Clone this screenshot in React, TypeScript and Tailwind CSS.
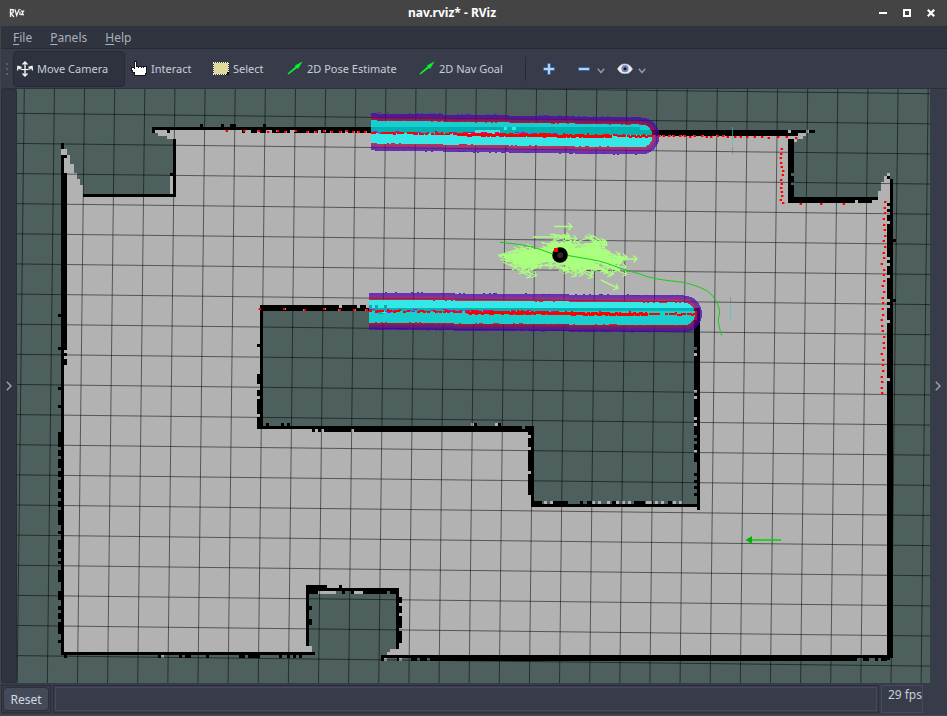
import type { ReactNode } from 'react'

type Box = [number, number, number, number]
type Point = [number, number]

const WALL = '#000000'
const FLOOR = '#b2b2b2'
const UNKNOWN = '#4d605d'

const seeded = (seed: number) => () => {
  seed = (seed * 1664525 + 1013904223) % 4294967296
  return seed / 4294967296
}

const boxPath = (boxes: Box[]) => boxes.map(([x, y, w, h]) => `M${x} ${y}h${w}v${h}h${-w}z`).join('')
const column = (x: number, spans: Point[]): Box[] => spans.map(([a, b]) => [x, a, 3, b - a])
const row = (y: number, spans: Point[]): Box[] => spans.map(([a, b]) => [a, y, b - a, 3])

const floorShape =
  'M61 149H67V155H70V164H74V173H77V179H80V185H83V197H170V176H173V139H167V136H158V133H155V130H656V133H806V130H809V133H806V136H803V139H797V142H791V203H872V200H878V191H881V182H884V176H887V173H890V658H384V655H387V652H390V649H396V591H309V646H312V652H61Z'

const walls: Box[] = [
  [61, 143, 3, 6], [61, 155, 6, 3], [61, 155, 3, 500], [64, 173, 3, 177],
  [64, 353, 3, 3], [64, 359, 3, 6],
  ...column(58, [[314, 317], [347, 350], [387, 390], [405, 408], [432, 447], [450, 456], [459, 468], [471, 477], [480, 489], [492, 498], [501, 507], [510, 525], [531, 534], [540, 549], [552, 558], [561, 564], [570, 582], [591, 600], [606, 610], [613, 619], [622, 634], [640, 643]]),
  [152, 127, 488, 3], [152, 127, 3, 6], [167, 130, 3, 3],
  ...row(124, [[200, 203], [221, 224], [230, 236], [263, 266]]),
  ...row(130, [[242, 245], [251, 257], [260, 266], [272, 290], [294, 318], [321, 345], [348, 475]]),
  [173, 139, 3, 58], [83, 194, 93, 3], [170, 173, 3, 3],
  [656, 130, 132, 6], [500, 130, 156, 5], [788, 130, 27, 3], [788, 133, 10, 3],
  [788, 139, 6, 64], [788, 197, 84, 6], [872, 197, 6, 3],
  [887, 176, 3, 3], [890, 179, 3, 9], [890, 188, 3, 470], [887, 230, 3, 430],
  ...column(887, [[203, 206], [209, 212], [215, 221], [224, 230]]),
  ...column(893, [[239, 242], [299, 302]]),
  [61, 652, 254, 3], [64, 655, 3, 3],
  ...row(655, [[158, 161], [179, 182], [185, 191], [206, 209], [239, 245], [248, 260], [279, 282], [287, 290], [293, 296], [299, 302]]),
  [381, 655, 512, 3], [430, 658, 427, 3], [381, 658, 3, 3],
  ...row(658, [[397, 400], [411, 417], [420, 427], [863, 869], [875, 878], [881, 887]]),
  [306, 585, 3, 61], [306, 585, 21, 3], [306, 588, 93, 3], [339, 585, 3, 3], [309, 591, 9, 3], [396, 588, 3, 61],
  ...row(591, [[342, 345], [351, 354], [363, 387], [390, 399]]),
  ...column(309, [[606, 610], [619, 625]]),
  ...column(399, [[597, 603], [606, 613], [616, 628], [631, 643]]),
  [260, 305, 79, 6], [342, 305, 15, 6], [360, 305, 6, 6], [339, 308, 361, 3],
  [260, 305, 3, 124],
  ...column(257, [[344, 347], [374, 384], [390, 396], [399, 414], [417, 429]]),
  [257, 426, 277, 3], [324, 429, 210, 3],
  ...row(429, [[312, 315], [318, 321]]),
  ...row(423, [[266, 269], [281, 284], [287, 290], [474, 477], [498, 501]]),
  [528, 429, 6, 66], [531, 495, 3, 12], [531, 504, 169, 3],
  ...row(501, [[531, 542], [552, 568], [580, 583], [587, 594], [612, 616], [634, 645], [650, 653], [668, 672]]),
  [697, 310, 3, 200], [694, 320, 3, 150],
  ...column(694, [[473, 476], [480, 483], [486, 489], [493, 496]]),
]

const floorGaps: Box[] = [
  ...column(887, [[257, 260], [263, 266], [275, 278], [299, 302], [305, 308], [320, 323], [378, 381]]),
  ...column(694, [[353, 356], [390, 393], [396, 399], [417, 420], [423, 426], [450, 453]]),
  ...column(528, [[435, 438], [447, 450], [471, 474]]),
  ...row(501, [[544, 547], [550, 553], [592, 595], [598, 601], [607, 610], [616, 619], [622, 625], [628, 631], [646, 652], [655, 658], [661, 664], [673, 676], [679, 682]]),
  [351, 429, 3, 3], [471, 423, 3, 3], [495, 423, 3, 3], [788, 130, 3, 3], [161, 655, 3, 3],
  [318, 591, 18, 3], [354, 591, 9, 3], [806, 130, 3, 3], [855, 200, 3, 3], [384, 658, 3, 3], [399, 658, 3, 3],
  [887, 179, 3, 24],
]

const unknownGaps: Box[] = [
  [791, 173, 3, 3], [791, 182, 3, 3], [522, 426, 3, 3],
  ...column(694, [[347, 350], [435, 438], [441, 444], [462, 470]]),
]

const laserHits: Point[] = [
  [227, 131], [244, 131], [259, 131], [268, 132], [278, 131], [285, 132], [296, 131], [307, 132], [316, 132], [324, 131], [332, 132], [340, 132], [347, 131], [353, 132], [359, 132], [365, 132],
  [260, 309], [284, 309], [305, 310], [324, 309], [340, 310], [354, 310], [367, 310],
  [659, 136], [664, 136], [669, 136], [674, 136], [680, 136], [685, 136], [690, 137], [695, 136],
  [702, 136], [707, 137], [711, 137], [718, 136], [723, 136], [728, 137], [735, 137], [741, 137], [747, 137], [755, 137], [762, 137], [769, 138], [778, 137], [787, 137], [796, 138],
  [782, 149], [781, 154], [781, 158], [781, 163], [782, 167], [783, 171], [783, 175], [781, 180], [782, 184], [781, 188], [782, 192], [782, 196], [781, 200], [783, 203], [801, 204], [821, 204], [844, 204],
  ...[885, 885, 885, 884, 884, 885, 885, 884, 885, 884, 884, 882, 884, 884, 884, 883, 884, 883, 883, 883, 883, 882, 882, 883, 884, 884, 884, 882, 883, 883, 883, 882, 882, 882, 882].map(
    (x, i): Point => [x, Math.round(202 + i * 5.63)],
  ),
]

const scanAlong = (x1: number, y1: number, x2: number, y2: number, seed: number) => {
  const rnd = seeded(seed)
  const red: Box[] = []
  const magenta: Box[] = []
  for (let x = x1; x < x2; x += 2) {
    const t = (x - x1) / (x2 - x1)
    const y = y1 + (y2 - y1) * t
    const density = t < 0.3 ? 0.5 : t < 0.85 ? 1 : 0.65
    if (rnd() < density) red.push([x, Math.round(y + rnd() - 1), 3, t > 0.3 && t < 0.85 ? 3 : 2])
    if (rnd() < density * 0.5) red.push([x, Math.round(y + rnd() * 2 - 2), 2, 2])
    if (t < 0.65 && rnd() < 0.55) magenta.push([x, Math.round(y + rnd() * 3 - 2), 4, 1])
  }
  return { red: boxPath(red), magenta: boxPath(magenta) }
}

const edgeNoise = (x1: number, y1: number, x2: number, y2: number, seed: number) => {
  const rnd = seeded(seed)
  const out: Box[] = []
  for (let x = x1; x < x2; x += 2)
    if (rnd() < 0.2) out.push([x, Math.round(y1 + ((y2 - y1) * (x - x1)) / (x2 - x1)), 2, 1])
  return boxPath(out)
}

const arrow = (x: number, y: number, angle: number, length: number) => {
  const tx = x + Math.cos(angle) * length
  const ty = y + Math.sin(angle) * length
  const side = (turn: number) =>
    `${(tx - Math.cos(angle + turn) * 5).toFixed(1)} ${(ty - Math.sin(angle + turn) * 5).toFixed(1)}`
  return `M${x.toFixed(1)} ${y.toFixed(1)}L${tx.toFixed(1)} ${ty.toFixed(1)}M${side(0.75)}L${tx.toFixed(1)} ${ty.toFixed(1)}L${side(-0.75)}`
}

const cloud = (() => {
  const rnd = seeded(41)
  const zones = [
    { x: 498, w: 20, y: 253, h: 9, n: 30 },
    { x: 510, w: 20, y: 250, h: 19, n: 42 },
    { x: 536, w: 26, y: 241, h: 26, n: 50 },
    { x: 556, w: 26, y: 246, h: 26, n: 56 },
    { x: 576, w: 16, y: 240, h: 24, n: 36 },
    { x: 594, w: 16, y: 254, h: 15, n: 28 },
  ]
  let d = ''
  for (const z of zones)
    for (let i = 0; i < z.n; i++) d += arrow(z.x + rnd() * z.w, z.y + rnd() * z.h, (rnd() - 0.42) * 0.95, 14 + rnd() * 5)
  return d
})()
const strays =
  arrow(554, 226.5, 0, 18) + arrow(620, 259, 0, 17) + arrow(601, 280, 0.46, 19) + arrow(533, 237, 0, 24) +
  arrow(550, 234.5, 0.1, 20) + arrow(558, 237, 0.1, 19) + arrow(585, 236, 0.4, 21) + arrow(592, 235, 0.6, 18)

const lanes = [
  { id: 'upper', left: 371, d: 'M350 131.6L641 136' },
  { id: 'lower', left: 369, d: 'M350 311.1L683.5 314' },
]
const inflation: [number, string][] = [
  [37, '#4700bd'], [35, '#4c00b0'], [33, '#5a009c'], [31, '#700085'], [29, '#8a006c'], [27, '#a40052'], [25, '#c00038'], [23, '#00ffff'],
]

const gridPath = (() => {
  let d = ''
  for (let i = -1; i < 32; i++) {
    const x = 24.3 + i * 30.13
    d += `M${x.toFixed(2)} 89L${(x - 7.1).toFixed(2)} 683`
  }
  for (let i = -1; i < 20; i++) {
    const y = 113.3 + i * 30.13
    d += `M17 ${y.toFixed(2)}L930 ${(y + 10.5).toFixed(2)}`
  }
  return d
})()

const upperScan = scanAlong(371, 132.5, 652, 136, 7)
const lowerScan = scanAlong(369, 310.5, 694, 314, 19)

function MapView() {
  return (
    <svg viewBox="17 89 913 594" preserveAspectRatio="xMidYMid slice" className="block h-full w-full" role="img" aria-label="Navigation map">
      <defs>
        <mask id="grid-mask" maskUnits="userSpaceOnUse" x="17" y="89" width="913" height="594">
          <rect x="17" y="89" width="913" height="594" fill="#fff" />
          {lanes.map((l) => (
            <path key={l.id} d={l.d} stroke="#000" strokeWidth="23" strokeLinecap="round" clipPath={`url(#clip-${l.id})`} />
          ))}
        </mask>
        {lanes.map((l) => (
          <clipPath key={l.id} id={`clip-${l.id}`}>
            <rect x={l.left} y="100" width="400" height="240" />
          </clipPath>
        ))}
      </defs>
      <rect x="17" y="89" width="913" height="594" fill={UNKNOWN} />
      <g shapeRendering="crispEdges">
        <path d={floorShape} fill={FLOOR} />
        <path d="M263 308H697V504H534V426H263ZM309 591H396V649H390V652H387V655H384V658H315V652H312V646H309ZM315 655H381V661H315ZM61 655H384V661H61Z" fill={UNKNOWN} />
        <path d={boxPath(walls)} fill={WALL} />
        <path d={boxPath(floorGaps)} fill={FLOOR} />
        <path d={boxPath(unknownGaps)} fill={UNKNOWN} />
      </g>
      <path d={gridPath} stroke="#000" strokeOpacity="0.52" fill="none" mask="url(#grid-mask)" />
      {lanes.map((l) => (
        <g key={l.id} opacity="0.7" clipPath={`url(#clip-${l.id})`} shapeRendering="crispEdges" strokeLinecap="round">
          {inflation.map(([w, color]) => (
            <path key={w} d={l.d} stroke={color} strokeWidth={w} />
          ))}
        </g>
      ))}
      <g shapeRendering="crispEdges">
        <path d={edgeNoise(371, 120, 641, 124, 3) + edgeNoise(371, 143, 641, 147, 5) + edgeNoise(369, 299, 683, 302, 9) + edgeNoise(369, 322, 683, 325, 11)} fill="#d02040" />
        <path d={edgeNoise(371, 112, 641, 117, 13) + edgeNoise(371, 150, 641, 154, 15) + edgeNoise(369, 292, 683, 295, 17) + edgeNoise(369, 329, 683, 332, 21)} fill="#5a24b0" />
        <path d="M474 127h12v3h-12zM489 127h12v3h-12zM369 305h3v3h-3zM375 305h3v3h-3zM384 305h3v3h-3zM378 311h6v3h-6z" fill="#0ba9a9" />
        <path d="M504 127h3v3h-3zM512 127h4v3h-4zM382 311h4v2h-4z" fill="#35e8e8" />
        <path d={upperScan.magenta + lowerScan.magenta} fill="#d000d0" />
        <path d={upperScan.red + lowerScan.red} fill="#ff0000" />
        <path d={boxPath(laserHits.map(([x, y]): Box => [x - 1, y - 1, 2, 2]))} fill="#ff0000" />
        <path d={boxPath(laserHits.map(([x, y], i): Box => [x + (i % 2 ? 1 : -2), y - 1, 1, 2]))} fill="#ff5a50" />
      </g>
      <path d="M504 255L525 252L545 247L556 241L568 249L585 247L600 246L606 256L614 262L610 264L598 262L585 266L572 269L560 262L540 262L520 262L504 258Z" fill="#aaff7f" />
      <path d={cloud} stroke="#aaff7f" strokeWidth="1.1" fill="none" />
      <path d={strays} stroke="#aaff7f" strokeWidth="1.4" fill="none" />
      <circle cx="560" cy="255" r="7.8" fill="#000" />
      <circle cx="560.3" cy="255.2" r="3" fill="#292b27" />
      <rect x="554" y="248" width="4" height="4" fill="#f00" />
      <path d="M500 242.3C516 244 528 245 540 249.3L553 254M568 255.5L590 259.3C602 261 612 265 622 269L640 274C652 279 663 280 683 282.3C695 285 706 289 711 294C717 301 720 308 719.5 314C717 320 719 326 721.5 335.5" stroke="#14cf14" fill="none" />
      <path d="M752 540H781" stroke="#00d400" strokeWidth="1.5" />
      <path d="M745.5 540L752 536V544Z" fill="#00b400" />
      <path d="M732.5 127V146M730.5 303V320" stroke="#38c9cf" strokeOpacity="0.6" />
      <path d="M732.5 147V154M730.5 297V303" stroke="#7a52a8" strokeOpacity="0.45" />
    </svg>
  )
}

const MoveIcon = () => (
  <svg viewBox="0 0 16 16" className="size-4" fill="none" stroke="#f4f4f0" strokeWidth="1.4">
    <path d="M8 1V15M5.5 3.5L8 1L10.5 3.5M5.5 12.5L8 15L10.5 12.5M1 6C3 9.5 13 9.5 15 6M.5 9.5L1 5.5L4.5 6.5M15.5 9.5L15 5.5L11.5 6.5" />
  </svg>
)
const HandIcon = () => (
  <svg viewBox="0 0 16 16" className="size-4" shapeRendering="crispEdges">
    <path d="M3 0H6V5H16V13H15V15H3V12H1V10H0V6H3Z" fill="#15171c" />
    <path d="M4 1H5V6H7V7H8V6H10V7H11V6H12V7H13V6H15V12H14V14H4V11H2V9H1V7H3V8H4Z" fill="#fff" />
  </svg>
)
const SelectIcon = () => (
  <svg viewBox="0 0 16 16" className="size-4" shapeRendering="crispEdges">
    <path d="M13 11h3v3h-3z" fill="#111" />
    <path d="M1 2h14v9h-1v2H1z" fill="#dfd99b" />
    <path d="M0 1.5H16M0 13.5H13M.5 2V14M15.5 2V11" fill="none" stroke="#fffce0" strokeDasharray="1 1" />
  </svg>
)
const ArrowIcon = () => (
  <svg viewBox="0 0 16 16" className="size-4">
    <path d="M.5 12.5L8.5 5.5L8 4.5L15.5 .5L11 8L10 7L1.5 13.5Z" fill="#00f52d" />
  </svg>
)
const Chevron = () => (
  <svg viewBox="0 0 8 6" className="mt-1 h-1.5 w-2" fill="none" stroke="#9297a3" strokeWidth="1.5">
    <path d="M.8 .8L4 4.5L7.2 .8" />
  </svg>
)
const SideChevron = () => (
  <svg viewBox="0 0 6 10" className="h-2.5 w-1.5" fill="none" stroke="#9ba0aa" strokeWidth="1.5">
    <path d="M.8 .8L5 5L.8 9.2" />
  </svg>
)

function Tool({ icon, label, className }: { icon: ReactNode; label: string; className: string }) {
  return (
    <button type="button" className={`flex h-9 items-center gap-1 rounded-sm border pl-[3px] text-[11px] whitespace-nowrap ${className}`}>
      {icon}
      {label}
    </button>
  )
}

export default function App() {
  return (
    <div className="flex h-screen flex-col overflow-hidden border-l border-[#44434a] bg-[#383c4a] font-['Noto_Sans',sans-serif] text-xs text-[#c8cdda]">
      <header className="flex h-[26px] shrink-0 items-center bg-[#444444] text-white">
        <svg viewBox="0 0 16 10" className="ml-2 h-2.5 w-4" fill="none" stroke="#f2f2f2" strokeWidth="1.3" aria-label="RViz">
          <path d="M1.5 9V1.5L4.5 1.8L4 4.6L1.5 5L5 9M6 1.5L7.7 7.5L10 1.5M11 3.5V7M11 1V2M12 3.2H14.5L12.5 6.5H15" />
        </svg>
        <h1 className="flex-1 text-center text-xs font-bold">nav.rviz* - RViz</h1>
        <div className="flex justify-end gap-4 pr-3">
          <button type="button" aria-label="Minimize" className="size-2">
            <svg viewBox="0 0 8 8" className="size-2"><path d="M0 3h8v2H0z" fill="#fff" /></svg>
          </button>
          <button type="button" aria-label="Maximize" className="size-2 border-2 border-white" />
          <button type="button" aria-label="Close" className="size-2">
            <svg viewBox="0 0 8 8" className="size-2"><path d="M.8 .8L7.2 7.2M7.2 .8L.8 7.2" stroke="#fff" strokeWidth="2.2" /></svg>
          </button>
        </div>
      </header>

      <nav className="flex h-[23px] shrink-0 items-center gap-[18px] border-b border-[#272a34] bg-[#2f343f] pt-0.5 pl-3 text-[#a9b0be]">
        <button type="button"><u className="underline-offset-2">F</u>ile</button>
        <button type="button"><u className="underline-offset-2">P</u>anels</button>
        <button type="button"><u className="underline-offset-2">H</u>elp</button>
      </nav>

      <div className="h-10 shrink-0 border-b border-[#2d303b] pt-0.5">
        <div className="flex h-9 items-center">
          <div className="flex w-3 flex-col items-center gap-[3px]">
            <i className="size-0.5 bg-[#5a5f6c]" />
            <i className="size-0.5 bg-[#5a5f6c]" />
            <i className="size-0.5 bg-[#5a5f6c]" />
          </div>
          <Tool icon={<MoveIcon />} label="Move Camera" className="w-28 border-[#262a34] bg-[#2d323e]" />
          <Tool icon={<HandIcon />} label="Interact" className="ml-0.5 w-20 border-transparent" />
          <Tool icon={<SelectIcon />} label="Select" className="ml-0.5 w-[72px] border-transparent" />
          <Tool icon={<ArrowIcon />} label="2D Pose Estimate" className="ml-0.5 w-[130px] border-transparent" />
          <Tool icon={<ArrowIcon />} label="2D Nav Goal" className="ml-0.5 w-[110px] border-transparent" />
          <div className="h-6 w-px bg-[#272a34]" />
          <button type="button" aria-label="Add tool" className="ml-[17px]">
            <svg viewBox="0 0 12 12" className="size-3"><path d="M4.5 .5h3v4h4v3h-4v4h-3v-4h-4v-3h4z" fill="#b5d3f1" stroke="#3569ac" /></svg>
          </button>
          <button type="button" aria-label="Remove tool" className="ml-[23px] flex items-center gap-[7px]">
            <svg viewBox="0 0 12 12" className="size-3"><path d="M.5 4.5h11v3H.5z" fill="#b5d3f1" stroke="#3569ac" /></svg>
            <Chevron />
          </button>
          <button type="button" aria-label="View options" className="ml-3 flex items-center gap-[5px]">
            <svg viewBox="0 0 16 12" className="h-3 w-4">
              <path d="M.5 6C3 1.5 5.5 1 8 1C11 1 13.5 2.5 15.5 6C13 10 11 10.5 8 10.5C5 10.5 3 10 .5 6Z" fill="#f0efed" stroke="#c5c3c0" strokeWidth=".7" />
              <circle cx="8" cy="5.7" r="3.6" fill="#7386c2" />
              <circle cx="8" cy="5.7" r="1.5" fill="#10163a" />
            </svg>
            <Chevron />
          </button>
        </div>
      </div>

      <main className="flex min-h-0 flex-1">
        <button type="button" aria-label="Show left panels" className="flex w-4 shrink-0 items-center justify-center rounded-sm border border-[#292d38] bg-[#2f3440]">
          <SideChevron />
        </button>
        <div className="min-h-0 min-w-0 flex-1">
          <MapView />
        </div>
        <button type="button" aria-label="Show right panels" className="flex w-[17px] shrink-0 items-center justify-center border-r border-[#44434a]">
          <SideChevron />
        </button>
      </main>

      <footer className="flex h-[33px] shrink-0 gap-0.5 border-b border-[#4b4850] pt-0.5 pr-6 pb-0.5">
        <div className="flex shrink-0 border border-[#2b2f3a] p-px">
          <button type="button" className="flex w-[46px] items-center justify-center rounded-sm border border-[#2b2f3a] bg-[#444a58] pt-px text-[#d3dae3]">Reset</button>
        </div>
        <div className="flex min-w-0 flex-1 border border-[#2b2f3a] p-px">
          <div className="flex-1 border border-[#454b5a]" />
        </div>
        <output className="flex w-[42px] shrink-0 justify-end border border-[#454b5a] pt-px text-xs leading-4">29 fps</output>
      </footer>
    </div>
  )
}
